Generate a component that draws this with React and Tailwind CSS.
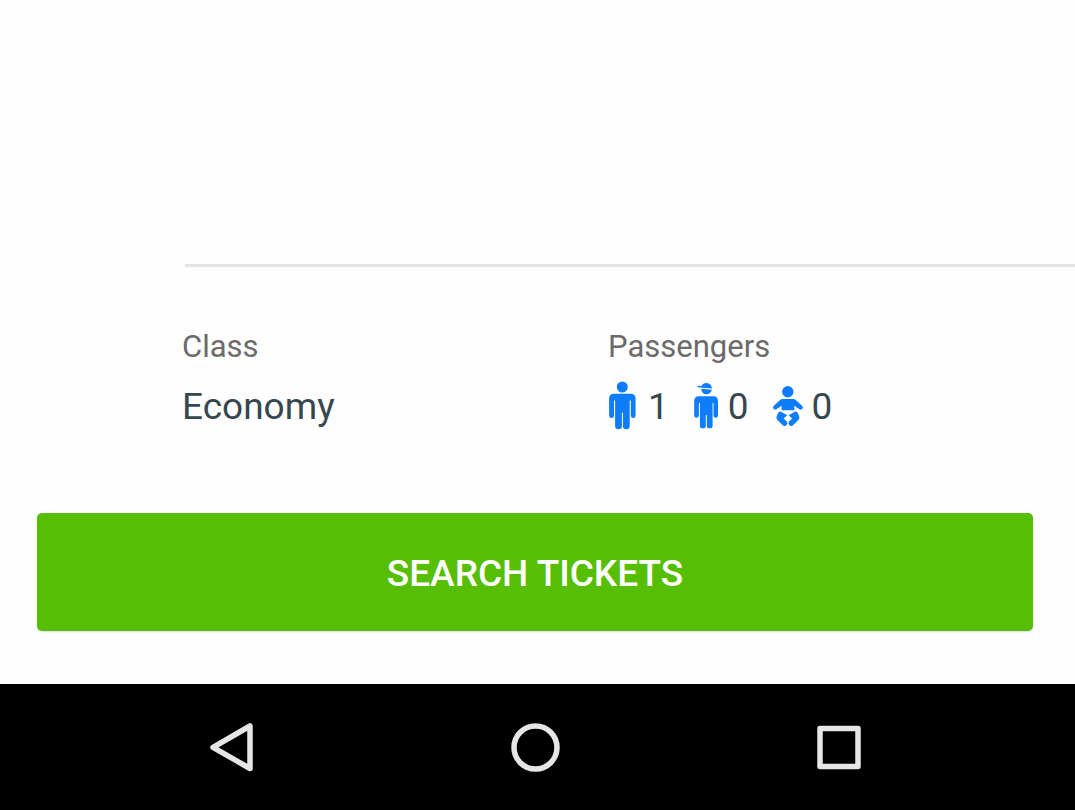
function AdultIcon() {
  return (
    <svg className="h-[52px] w-8 shrink-0" viewBox="0 0 32 52" fill="#0f7dfa" aria-hidden="true">
      <circle cx="14.3" cy="6" r="5.5" />
      <path d="M6 12.7H22.6Q27.6 12.7 27.6 17.7V34.5Q27.6 37 25.2 37Q22.8 37 22.8 34.5V19.5H21.7V45.3Q21.7 48.2 18.3 48.2Q14.9 48.2 14.9 45.3V31.5H13.9V45.3Q13.9 48.2 10.5 48.2Q7.1 48.2 7.1 45.3V19.5H6V34.5Q6 37 3.5 37Q1.1 37 1.1 34.5V17.7Q1.1 12.7 6 12.7Z" />
    </svg>
  );
}

function ChildIcon() {
  return (
    <svg className="h-[52px] w-8 shrink-0" viewBox="0 0 32 52" fill="#0f7dfa" aria-hidden="true">
      <path d="M8.6 5.4Q10.5 4.4 13.2 4.9Q15 2 18.6 2Q23.4 2.2 24 7.6L14.5 6.8Q11 6.6 8.6 5.4Z" />
      <path d="M13.2 7.7L23.9 8.8Q22.6 13.2 18.4 13.3Q13.6 13 13.2 7.7Z" />
      <path d="M11 15.2H25.5Q30 15.2 30 20V34.4Q30 36.8 27.8 36.8Q25.5 36.8 25.5 34.4V22H24.6V44.7Q24.6 47.3 21.7 47.3Q18.8 47.3 18.8 44.7V34H17.8V44.7Q17.8 47.3 14.9 47.3Q11.9 47.3 11.9 44.7V22H10.9V34.4Q10.9 36.8 8.5 36.8Q6.2 36.8 6.2 34.4V20Q6.2 15.2 11 15.2Z" />
    </svg>
  );
}

function InfantIcon() {
  return (
    <svg className="h-[52px] w-9 shrink-0" viewBox="0 0 36 52" fill="#0f7dfa" aria-hidden="true">
      <circle cx="19.8" cy="10.8" r="5.7" />
      <path d="M14.5 18H25.3Q26.8 18 28 19.2L34.3 25Q35.6 26.6 34.3 28Q33 29.2 31.4 28.2L26.3 24.8V29.2H13.6V24.8L8.4 28.2Q6.8 29.2 5.6 28Q4.4 26.6 5.6 25L11.8 19.2Q13 18 14.5 18Z" />
      <path d="M12.4 30.6L19.3 34.2L15.6 37.4L18.8 40.4Q20 42.3 18.7 43.9Q16.8 45.7 14.7 44.2L9 38.4Q7.9 36.8 8.7 35.1L10.4 31.5Q11.2 30.1 12.4 30.6Z" />
      <path d="M27.4 30.6L20.5 34.2L24.2 37.4L21 40.4Q19.8 42.3 21.1 43.9Q23 45.7 25.1 44.2L30.8 38.4Q31.9 36.8 31.1 35.1L29.4 31.5Q28.6 30.1 27.4 30.6Z" />
    </svg>
  );
}

const passengers = [
  { label: "Adults", count: 1, Icon: AdultIcon },
  { label: "Children", count: 0, Icon: ChildIcon },
  { label: "Infants", count: 0, Icon: InfantIcon },
];

export default function App() {
  return (
    <div className="flex min-h-screen flex-col bg-[#fefefe] font-[Roboto,sans-serif]">
      <main className="flex flex-1 flex-col justify-end pb-[53px]">
        <hr className="ml-[185px] border-0 border-t-[3px] border-[#e3e3e3]" />
        <dl className="grid grid-cols-[426fr_467fr] pl-[182px] pt-[60px]">
          <div>
            <dt className="text-[31px] leading-[40px] text-[#6b6b6b]">Class</dt>
            <dd className="mt-[14px] text-[37px] leading-[52px] text-[#37474f]">Economy</dd>
          </div>
          <div>
            <dt className="text-[31px] leading-[40px] text-[#6b6b6b]">Passengers</dt>
            <dd className="mt-[14px] flex gap-[19px] text-[37px] leading-[52px] text-[#37474f]">
              {passengers.map(({ label, count, Icon }) => (
                <span key={label} className="flex gap-2">
                  <Icon />
                  <span>{count}</span>
                </span>
              ))}
            </dd>
          </div>
        </dl>
        <button
          type="button"
          className="ml-[37px] mr-[42px] mt-[80px] h-[118px] rounded-[5px] bg-[#55be05] pt-1 text-[37px] font-medium text-white shadow-[0_1px_2px_rgba(0,0,0,0.15)]"
        >
          SEARCH TICKETS
        </button>
      </main>
      <nav className="flex h-[126px] items-center justify-between bg-black pl-[207px] pr-[211px]">
        <button type="button" aria-label="Back">
          <svg className="size-[50px]" viewBox="0 0 50 50" fill="none" stroke="#e6e6e6" strokeWidth="5.5" strokeLinejoin="round" aria-hidden="true">
            <path d="M43 4V46.5L6 25.3Z" />
          </svg>
        </button>
        <button type="button" aria-label="Home">
          <svg className="size-[50px]" viewBox="0 0 50 50" fill="none" stroke="#e6e6e6" strokeWidth="5.5" aria-hidden="true">
            <circle cx="24.5" cy="25.5" r="21.5" />
          </svg>
        </button>
        <button type="button" aria-label="Recent apps">
          <svg className="size-[50px]" viewBox="0 0 50 50" fill="none" stroke="#e6e6e6" strokeWidth="5.5" strokeLinejoin="round" aria-hidden="true">
            <rect x="6" y="6.5" width="38" height="38" />
          </svg>
        </button>
      </nav>
    </div>
  );
}
